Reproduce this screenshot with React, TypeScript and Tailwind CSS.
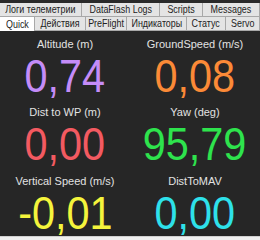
export default function App() {
  const topTabs = [
    { label: "Логи телеметрии", w: "w-[82px]" },
    { label: "DataFlash Logs", w: "w-[78px]" },
    { label: "Scripts", w: "w-[43px]" },
    { label: "Messages", w: "flex-1" },
  ];
  const bottomTabs = [
    { label: "Quick", w: "w-[35px]", active: true },
    { label: "Действия", w: "w-[51px]" },
    { label: "PreFlight", w: "w-[41px]" },
    { label: "Индикаторы", w: "w-[60px]" },
    { label: "Статус", w: "w-[39px]" },
    { label: "Servo", w: "flex-1" },
  ];
  const cells = [
    { label: "Altitude (m)", value: "0,74", color: "text-[#c48cf8]" },
    { label: "GroundSpeed (m/s)", value: "0,08", color: "text-[#fb8a37]" },
    { label: "Dist to WP (m)", value: "0,00", color: "text-[#f35a61]" },
    { label: "Yaw (deg)", value: "95,79", color: "text-[#2ee34d]" },
    { label: "Vertical Speed (m/s)", value: "-0,01", color: "text-[#f4f43c]" },
    { label: "DistToMAV", value: "0,00", color: "text-[#2ee1ea]" },
  ];

  return (
    <div className="flex h-[240px] w-[260px] flex-col overflow-hidden bg-[#f0f0f0] font-['Liberation_Sans',sans-serif]">
      <div className="h-[3px] bg-[#2a2a2a]" />
      <div className="flex h-[14px] border-b border-[#a8a8a8]">
        {topTabs.map((t) => (
          <div
            key={t.label}
            className={`${t.w} flex items-center justify-center overflow-hidden whitespace-nowrap border-r border-[#a8a8a8] bg-[#e4e4e4] text-[10.5px] leading-none text-[#222]`}
          >
            <span className="inline-block scale-x-[0.85]">{t.label}</span>
          </div>
        ))}
      </div>
      <div className="flex h-[14px]">
        {bottomTabs.map((t) => (
          <div
            key={t.label}
            className={`${t.w} flex items-center justify-center overflow-hidden whitespace-nowrap border-r border-[#a8a8a8] text-[10.5px] leading-none text-[#222] ${
              t.active ? "bg-white" : "bg-[#e4e4e4] border-b"
            }`}
          >
            <span className="inline-block scale-x-[0.85]">{t.label}</span>
          </div>
        ))}
      </div>
      <div className="grid h-[205px] grid-cols-2 grid-rows-3 bg-[#262626]">
        {cells.map((c) => (
          <div key={c.label} className="flex flex-col items-center pt-[6px]">
            <div className="whitespace-nowrap text-[11px] leading-[14px] text-[#e2e2e2]">{c.label}</div>
            <div
              className={`${c.color} mt-[1px] scale-x-[0.9] text-[46px] leading-[48px]`}
            >
              {c.value}
            </div>
          </div>
        ))}
      </div>
      <div className="flex-1 border-t border-[#d0d0d0] bg-[#f0f0f0]" />
    </div>
  );
}
